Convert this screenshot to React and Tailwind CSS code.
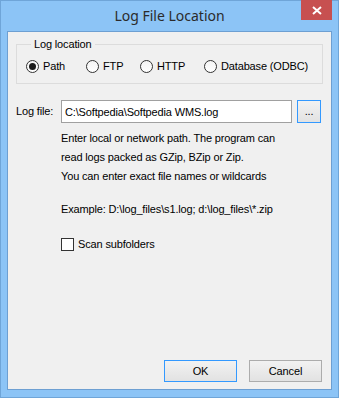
import { useState } from "react";

function Radio({ label, checked, onClick, className }) {
  return (
    <label onClick={onClick} className={"flex items-center gap-[4px] cursor-default " + className}>
      <span className="flex h-[13px] w-[13px] items-center justify-center rounded-full border border-[#333333] bg-gradient-to-b from-[#f4f4f4] to-[#ffffff]">
        {checked && <span className="h-[7px] w-[7px] rounded-full bg-[#1a1a1a]" />}
      </span>
      <span>{label}</span>
    </label>
  );
}

export default function App() {
  const [source, setSource] = useState("Path");
  const [path, setPath] = useState("C:\\Softpedia\\Softpedia WMS.log");
  const [scan, setScan] = useState(false);

  return (
    <div className="flex h-[398px] w-[339px] flex-col border border-[#6fa5d8] bg-[#8cc4f6] font-['Liberation_Sans',Arial,sans-serif] text-[11px] leading-[13px] tracking-[-0.15px] text-black">
      <div className="grid h-[30px] grid-cols-[1fr_auto_1fr]">
        <div />
        <div className="pt-[5px] font-['Noto_Sans',sans-serif] text-[14px] leading-[19px] tracking-normal text-[#2b2b2b]">Log File Location</div>
        <div className="flex justify-end pr-[6px]">
          <button className="flex h-[20px] w-[31px] -mt-px items-center justify-center bg-[#c75050] text-white">
            <svg width="10" height="9" viewBox="0 0 10 9">
              <path d="M1 1 L9 8 M9 1 L1 8" stroke="white" strokeWidth="2" />
            </svg>
          </button>
        </div>
      </div>

      <div className="mx-[6px] flex flex-1 flex-col border border-[#6d9fd2] bg-[#f0f0f0] px-[8px]">
        <fieldset className="mt-[6px] border border-[#dcdcdc] px-[9px] pb-[10px] pt-[9px]">
          <legend className="ml-[5px] px-[3px]">Log location</legend>
          <div className="flex items-center">
            <Radio label="Path" checked={source === "Path"} onClick={() => setSource("Path")} className="w-[60px]" />
            <Radio label="FTP" checked={source === "FTP"} onClick={() => setSource("FTP")} className="w-[54px]" />
            <Radio label="HTTP" checked={source === "HTTP"} onClick={() => setSource("HTTP")} className="w-[64px]" />
            <Radio label="Database (ODBC)" checked={source === "Database (ODBC)"} onClick={() => setSource("Database (ODBC)")} />
          </div>
        </fieldset>

        <div className="mt-[16px] flex items-center">
          <span className="w-[45px]">Log file:</span>
          <input
            value={path}
            onChange={(e) => setPath(e.target.value)}
            className="h-[23px] w-[231px] border border-[#a0a0a0] bg-white px-[3px] text-[11px] outline-none"
          />
          <button className="ml-[5px] h-[23px] w-[24px] border border-[#3399ff] bg-gradient-to-b from-[#f2f2f2] to-[#e2e2e2] pb-[2px] leading-[10px]">...</button>
        </div>

        <div className="ml-[45px] mt-[6px] leading-[19px]">
          <p>Enter local or network path. The program can</p>
          <p>read logs packed as GZip, BZip or Zip.</p>
          <p>You can enter exact file names or wildcards</p>
          <p className="mt-[14px]">Example: D:\log_files\s1.log; d:\log_files\*.zip</p>
          <label className="mt-[16px] flex items-center gap-[4px]" onClick={() => setScan(!scan)}>
            <span className="flex h-[13px] w-[13px] items-center justify-center border border-[#333333] bg-white text-[10px]">
              {scan ? "✓" : ""}
            </span>
            <span>Scan subfolders</span>
          </label>
        </div>

        <div className="mt-auto mb-[7px] flex justify-end gap-[12px] pr-[1px]">
          <button className="h-[22px] w-[73px] border border-[#3399ff] bg-gradient-to-b from-[#f2f2f2] to-[#e2e2e2]">OK</button>
          <button className="h-[22px] w-[73px] border border-[#acacac] bg-gradient-to-b from-[#f2f2f2] to-[#e2e2e2]">Cancel</button>
        </div>
      </div>
      <div className="h-[7px]" />
    </div>
  );
}
